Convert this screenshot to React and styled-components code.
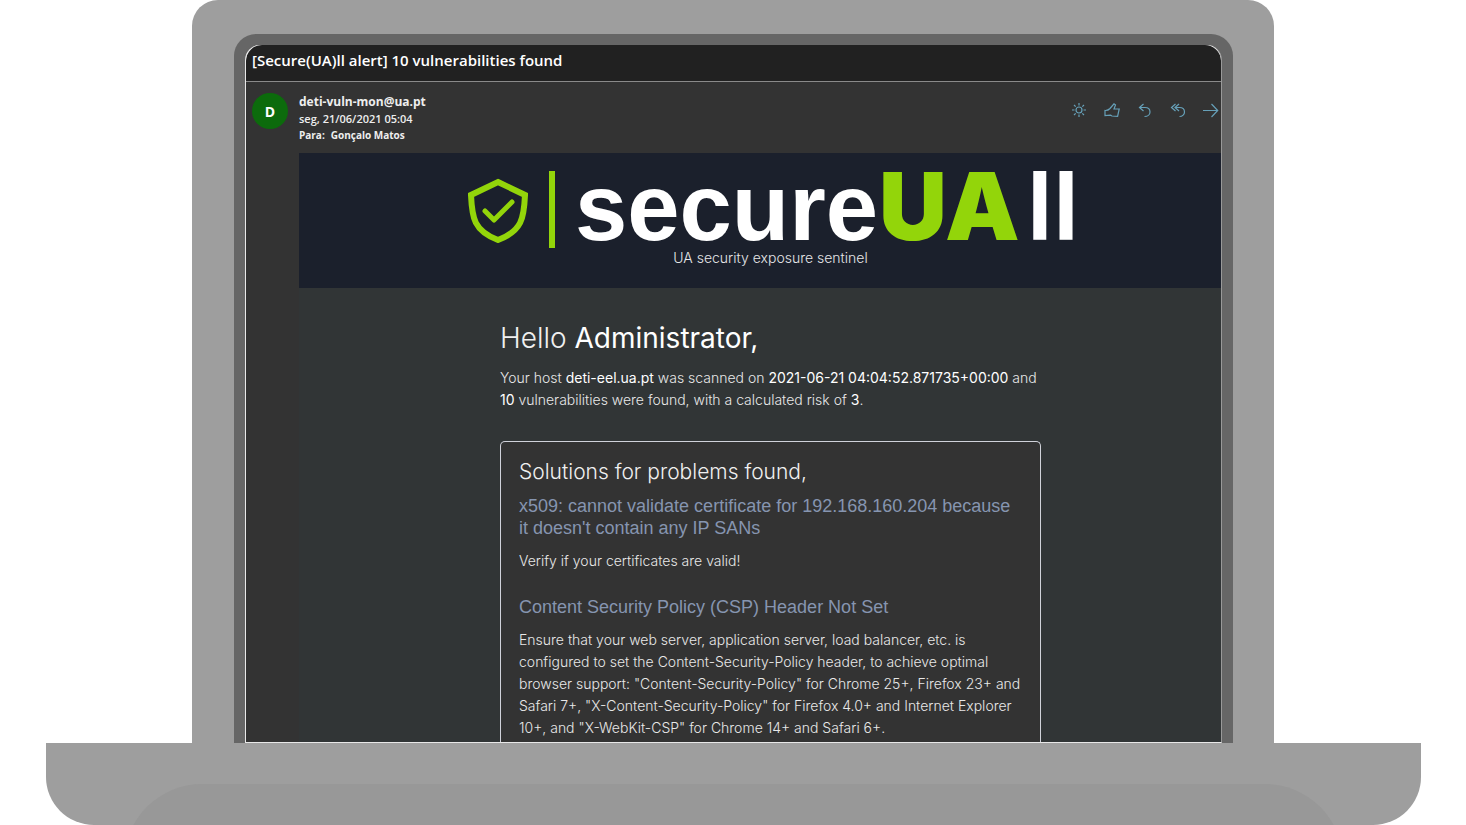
import React from "react";
import styled, { createGlobalStyle } from "styled-components";

const GlobalStyle = createGlobalStyle`
  * { box-sizing: border-box; }
  body { margin: 0; background: #fff; }
  h1, h2, h3, p { margin: 0; font-weight: inherit; }
`;

const Laptop = styled.div`
  padding: 0 45px 0 46px;
  overflow: hidden;
`;

const Lid = styled.div`
  margin: 0 147px 0 146px;
  padding: 34px 41px 0 42px;
  background: #9e9e9e;
  border-radius: 26px 26px 0 0;
`;

const Bezel = styled.div`
  padding: 11px 11px 0;
  background: #666;
  border-radius: 22px 22px 0 0;
`;

const Screen = styled.main`
  overflow: hidden;
  background: linear-gradient(#fff 20px, #333 20px);
  border: 1px solid #e8e8e8;
  border-top: 0;
  border-right-color: #999;
  border-radius: 15px 15px 0 0;
  color: #fff;
`;

const Base = styled.div`
  height: 82px;
  padding: 41px 78px 0;
  overflow: hidden;
  background: #9e9e9e;
  border-radius: 0 0 48px 48px;
`;

const Foot = styled.div`
  height: 80px;
  background: #989898;
  border-radius: 78px 78px 0 0;
`;

const Subject = styled.h1`
  height: 37px;
  padding: 0 6px;
  background: #212121;
  border-bottom: 1px solid #8a8a8a;
  border-radius: 16px 16px 0 0;
  font: 600 15px/30px "Open Sans", sans-serif;
`;

const MailHeader = styled.header`
  display: flex;
  gap: 11px;
  height: 71px;
  padding: 11px 2px 0 6px;
  font-family: "Open Sans", sans-serif;
  font-weight: 700;
`;

const Avatar = styled.div`
  flex: none;
  width: 36px;
  height: 36px;
  border-radius: 50%;
  background: #0c6b0c;
  font-size: 14px;
  line-height: 38px;
  text-align: center;
`;

const Sender = styled.div`
  flex: 1;
  font-size: 10px;
  line-height: 16px;
  color: #eee;
`;

const Address = styled.div`
  font-size: 12px;
  line-height: 18px;
`;

const SentDate = styled.time`
  display: block;
  font-size: 11px;
  font-weight: 600;
`;

const Recipient = styled.span`
  margin-left: 6px;
`;

const Actions = styled.div`
  display: flex;
  gap: 17px;
  padding-top: 10px;
`;

const IconButton = styled.button`
  width: 16px;
  height: 16px;
  padding: 0;
  border: 0;
  background: none;
  color: #66a0b8;

  svg {
    display: block;
    fill: none;
    stroke: currentColor;
    stroke-width: 1.2;
  }
`;

const Message = styled.article`
  margin-left: 53px;
  background: #313536;
  font-family: Inter, "Liberation Sans", sans-serif;
  font-weight: 300;
`;

const MailBody = styled.div`
  background: #333;
`;

const Banner = styled.div`
  display: flex;
  flex-direction: column;
  align-items: center;
  height: 135px;
  padding: 18px 0 0 21px;
  background: #1b202c;
`;

const Logo = styled.div`
  display: flex;
  align-items: center;
  height: 77px;
  margin-left: 6px;
`;

const Divider = styled.span`
  width: 6px;
  height: 77px;
  margin: 0 20px 0 21px;
  background: #93d50a;
`;

const Wordmark = styled.div`
  padding-bottom: 6px;
  font-family: "Liberation Sans", sans-serif;
  font-size: 94px;
  font-weight: 700;
  line-height: 77px;
  white-space: nowrap;
`;

const Accent = styled.span`
  margin: 0 7px 0 1px;
  font-family: Inter, sans-serif;
  font-weight: 900;
  color: #93d50a;
`;

const Tagline = styled.p`
  font-size: 14px;
  line-height: 20px;
  color: #e6e6e8;
`;

const Content = styled.div`
  padding-left: 21px;
`;

const Column = styled.div`
  max-width: 541px;
  margin: 0 auto;
  padding-top: 33px;
`;

const Greeting = styled.h2`
  margin-bottom: 12px;
  font-size: 28px;
  line-height: 34px;
  color: #f0f0f0;
`;

const Text = styled.p`
  font-size: 14px;
  line-height: 22px;
  color: #e8e8e8;
`;

const Strong = styled.strong`
  font-weight: 400;
  color: #fff;
`;

const Card = styled.section`
  margin-top: 30px;
  padding: 16px 18px 3px;
  background: #333;
  border: 1px solid #d0d2da;
  border-bottom: 0;
  border-radius: 5px 5px 0 0;
`;

const CardTitle = styled.h2`
  font-size: 21px;
  line-height: 28px;
  color: #f0f0f0;
`;

const Problem = styled.h3`
  margin: 9px 0 11px;
  font-family: "Liberation Sans", sans-serif;
  font-size: 18px;
  font-weight: 400;
  line-height: 22px;
  color: #8695b0;

  ${Text} + & { margin-top: 24px; }
`;

export default function App() {
  return (
    <>
      <GlobalStyle />
      <Laptop>
        <Lid>
          <Bezel>
            <Screen>
              <Subject>[Secure(UA)ll alert] 10 vulnerabilities found</Subject>
              <MailBody>
                <MailHeader>
                  <Avatar>D</Avatar>
                  <Sender>
                    <Address>deti-vuln-mon@ua.pt</Address>
                    <SentDate dateTime="2021-06-21T05:04">seg, 21/06/2021 05:04</SentDate>
                    <div>Para:<Recipient>Gonçalo Matos</Recipient></div>
                  </Sender>
                  <Actions>
                    <IconButton aria-label="Light mode">
                      <svg width="16" height="16">
                        <circle cx="8" cy="7" r="3" />
                        <path d="M8 0v2.500M8 11.500v2.500M1 7h2.500M12.500 7h2.500M3 2l1.700 1.700M11.300 10.300l1.700 1.700M13 2l-1.700 1.700M4.700 10.300L3 12" />
                      </svg>
                    </IconButton>
                    <IconButton aria-label="Like">
                      <svg width="16" height="16">
                        <path d="M1 7.500q3 .2 5-2L10 .8l1.500 1.200L10 6h5.200l-1.600 7.300L8 13l-1.500-.8L1 12.500z" />
                      </svg>
                    </IconButton>
                    <IconButton aria-label="Reply">
                      <svg width="16" height="16">
                        <path d="M6.500 1l-4 3.500 4 3.500M2.500 4.500H8c3.500 0 5 2.200 5 4.500S11 13.500 7.500 13.500" />
                      </svg>
                    </IconButton>
                    <IconButton aria-label="Reply all">
                      <svg width="16" height="16">
                        <path d="M5.500 1l-4 3.500 4 3.500M9 1L5 4.500l4 3.500M5 4.500h4.500c3.500 0 5 2.200 5 4.500s-2 4.500-5 4.500" />
                      </svg>
                    </IconButton>
                    <IconButton aria-label="Forward">
                      <svg width="16" height="16">
                        <path d="M0 7.500h14.500M8.500 1l6.200 6.500L8.500 14" />
                      </svg>
                    </IconButton>
                  </Actions>
                </MailHeader>
                <Message>
                  <Banner>
                    <Logo>
                      <svg width="60" height="66" fill="none" stroke="#93d50a" strokeWidth="6" strokeLinejoin="round" strokeLinecap="round" aria-hidden="true">
                        <path d="M30 5L57 18C56 41 54 54 30 63C6 54 4 41 3 18Z" strokeLinejoin="miter" />
                        <path d="M17 34l9 9 18-18" strokeWidth="5" />
                      </svg>
                      <Divider />
                      <Wordmark>secure<Accent>UA</Accent>ll</Wordmark>
                    </Logo>
                    <Tagline>UA security exposure sentinel</Tagline>
                  </Banner>
                  <Content>
                    <Column>
                      <Greeting>Hello <Strong>Administrator,</Strong></Greeting>
                      <Text>
                        Your host <Strong>deti-eel.ua.pt</Strong> was scanned on{" "}
                        <Strong>2021-06-21 04:04:52.871735+00:00</Strong> and{" "}
                        <Strong>10</Strong> vulnerabilities were found, with a calculated risk of <Strong>3</Strong>.
                      </Text>
                      <Card>
                        <CardTitle>Solutions for problems found,</CardTitle>
                        <Problem>x509: cannot validate certificate for 192.168.160.204 because it doesn't contain any IP SANs</Problem>
                        <Text>Verify if your certificates are valid!</Text>
                        <Problem>Content Security Policy (CSP) Header Not Set</Problem>
                        <Text>
                          Ensure that your web server, application server, load balancer, etc. is
                          configured to set the Content-Security-Policy header, to achieve optimal
                          browser support: "Content-Security-Policy" for Chrome 25+, Firefox 23+ and
                          Safari 7+, "X-Content-Security-Policy" for Firefox 4.0+ and Internet Explorer
                          10+, and "X-WebKit-CSP" for Chrome 14+ and Safari 6+.
                        </Text>
                      </Card>
                    </Column>
                  </Content>
                </Message>
              </MailBody>
            </Screen>
          </Bezel>
        </Lid>
        <Base>
          <Foot />
        </Base>
      </Laptop>
    </>
  );
}
